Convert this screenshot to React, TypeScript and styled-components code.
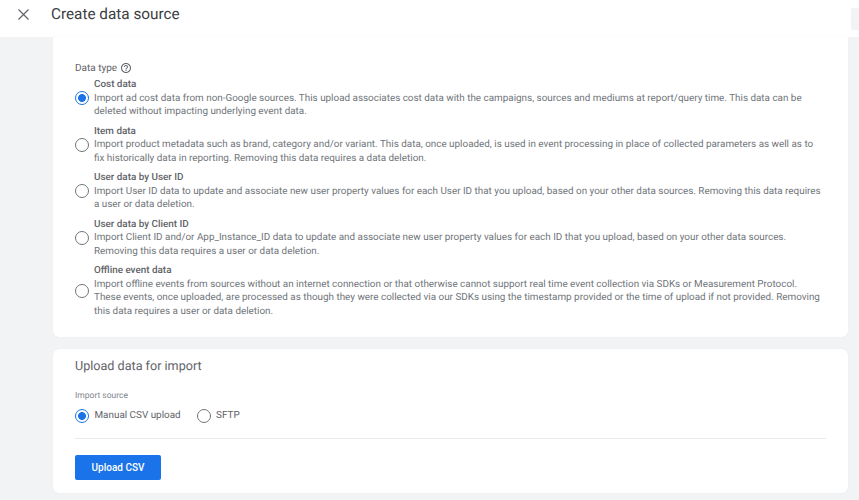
import styled, { createGlobalStyle } from "styled-components";

type dataOption = {
  title: string;
  text: string;
};

const dataOptions: dataOption[] = [
  {
    title: "Cost data",
    text: "Import ad cost data from non-Google sources. This upload associates cost data with the campaigns, sources and mediums at report/query time. This data can be deleted without impacting underlying event data.",
  },
  {
    title: "Item data",
    text: "Import product metadata such as brand, category and/or variant. This data, once uploaded, is used in event processing in place of collected parameters as well as to fix historically data in reporting. Removing this data requires a data deletion.",
  },
  {
    title: "User data by User ID",
    text: "Import User ID data to update and associate new user property values for each User ID that you upload, based on your other data sources. Removing this data requires a user or data deletion.",
  },
  {
    title: "User data by Client ID",
    text: "Import Client ID and/or App_Instance_ID data to update and associate new user property values for each ID that you upload, based on your other data sources. Removing this data requires a user or data deletion.",
  },
  {
    title: "Offline event data",
    text: "Import offline events from sources without an internet connection or that otherwise cannot support real time event collection via SDKs or Measurement Protocol. These events, once uploaded, are processed as though they were collected via our SDKs using the timestamp provided or the time of upload if not provided. Removing this data requires a user or data deletion.",
  },
];

export default function App() {
  return (
    <>
      <GlobalStyle />
      <SHeader>
        <SCloseButton aria-label="Close">
          <svg width="11" height="11" viewBox="0 0 11 11">
            <path d="M.5.5L10.500 10.500M10.500.5L.5 10.500" stroke="#5f6368" strokeWidth="1.2" fill="none" />
          </svg>
        </SCloseButton>
        <STitle>Create data source</STitle>
        <SScrollStub />
      </SHeader>
      <SMain>
        <STypeCard>
          <SFieldLabel>
            Data type
            <svg width="12" height="12" viewBox="0 0 24 24" fill="#5f6368">
              <path d="M11 18h2v-2h-2v2zm1-16C6.48 2 2 6.48 2 12s4.48 10 10 10 10-4.48 10-10S17.52 2 12 2zm0 18c-4.41 0-8-3.59-8-8s3.59-8 8-8 8 3.59 8 8-3.59 8-8 8zm0-14c-2.21 0-4 1.790-4 4h2c0-1.100.9-2 2-2s2 .9 2 2c0 2-3 1.750-3 5h2c0-2.250 3-2.500 3-5 0-2.210-1.790-4-4-4z" />
            </svg>
          </SFieldLabel>
          <SOptionList>
            {dataOptions.map(({ title, text }, i) => (
              <SOption key={title}>
                <SRadio $checked={i === 0} />
                <div>
                  <SOptionTitle>{title}</SOptionTitle>
                  <SOptionText>{text}</SOptionText>
                </div>
              </SOption>
            ))}
          </SOptionList>
        </STypeCard>
        <SUploadCard>
          <SCardHeading>Upload data for import</SCardHeading>
          <SSourceLabel>Import source</SSourceLabel>
          <SSourceRow>
            <SSourceChoice>
              <SRadio $checked />
              Manual CSV upload
            </SSourceChoice>
            <SSourceChoice>
              <SRadio />
              SFTP
            </SSourceChoice>
          </SSourceRow>
          <SDivider />
          <SUploadButton>Upload CSV</SUploadButton>
        </SUploadCard>
      </SMain>
    </>
  );
}

const GlobalStyle = createGlobalStyle`
  html, body {
    margin: 0;
    height: 500px;
    overflow: hidden;
    background: #f1f3f4;
    font-family: Roboto, "Liberation Sans", sans-serif;
    text-rendering: geometricPrecision;
  }
`;

const SHeader = styled.header`
  display: flex;
  align-items: center;
  height: 37px;
  padding: 0 0 9px 18px;
  box-sizing: border-box;
  background: #fff;
`;

const SCloseButton = styled.button`
  display: flex;
  width: 11px;
  height: 11px;
  padding: 0;
  border: 0;
  background: none;
`;

const STitle = styled.h1`
  flex: 1;
  margin: 0 0 0 22px;
  font-size: 15.3px;
  font-weight: 400;
  color: #3c4043;
`;

const SScrollStub = styled.div`
  width: 8px;
  height: 22px;
  margin-top: 9px;
  border-radius: 2px 0 0 2px;
  background: #f1f3f4;
`;

const SMain = styled.main`
  display: flex;
  flex-direction: column;
  gap: 12px;
  margin: 0 11px 0 53px;
`;

const STypeCard = styled.section`
  height: 300px;
  padding: 24px 22px 0;
  box-sizing: border-box;
  border-radius: 0 0 6px 6px;
  background: #fff;
  box-shadow: 0 0 1px #dadce0;
`;

const SFieldLabel = styled.div`
  display: flex;
  align-items: center;
  gap: 3px;
  height: 14px;
  font-size: 10px;
  color: #5f6368;
`;

const SOptionList = styled.div`
  display: flex;
  flex-direction: column;
  gap: 6px;
  margin-top: 3px;
`;

const SOption = styled.label`
  display: flex;
  align-items: center;
  gap: 5px;
`;

const SRadio = styled.span<{ $checked?: boolean }>`
  flex: none;
  width: 14px;
  height: 14px;
  box-sizing: border-box;
  border-radius: 50%;
  border: 1.4px solid ${({ $checked }) => ($checked ? "#1a73e8" : "#70757a")};
  background: ${({ $checked }) =>
    $checked ? "radial-gradient(circle, #1a73e8 0 3.6px, #fff 4.2px)" : "#fff"};
`;

const SOptionTitle = styled.div`
  font-size: 9.9px;
  font-weight: 500;
  line-height: 13px;
  margin-bottom: 0.5px;
  color: #5f6368;
`;

const SOptionText = styled.div`
  max-width: 730px;
  font-size: 9.9px;
  line-height: 13.5px;
  color: #70757a;
`;

const SUploadCard = styled.section`
  height: 144px;
  padding: 9px 22px 0;
  box-sizing: border-box;
  border-radius: 6px;
  background: #fff;
  box-shadow: 0 0 1px #dadce0;
`;

const SCardHeading = styled.h2`
  margin: 0;
  font-size: 12.6px;
  font-weight: 400;
  line-height: 17px;
  color: #5f6368;
`;

const SSourceLabel = styled.div`
  margin-top: 15px;
  font-size: 8.5px;
  line-height: 12px;
  color: #80868b;
`;

const SSourceRow = styled.div`
  display: flex;
  gap: 16px;
  margin-top: 7px;
`;

const SSourceChoice = styled.label`
  display: flex;
  align-items: center;
  gap: 5.5px;
  font-size: 9.9px;
  line-height: 14px;
  color: #5f6368;
`;

const SDivider = styled.hr`
  margin: 15px 0 0;
  border: 0;
  border-top: 1px solid #e8eaed;
`;

const SUploadButton = styled.button`
  display: block;
  width: 86px;
  height: 25px;
  margin-top: 16px;
  padding: 0;
  border: 0;
  border-radius: 2px;
  background: #1a73e8;
  color: #fff;
  font-family: inherit;
  font-size: 10px;
  font-weight: 500;
`;
